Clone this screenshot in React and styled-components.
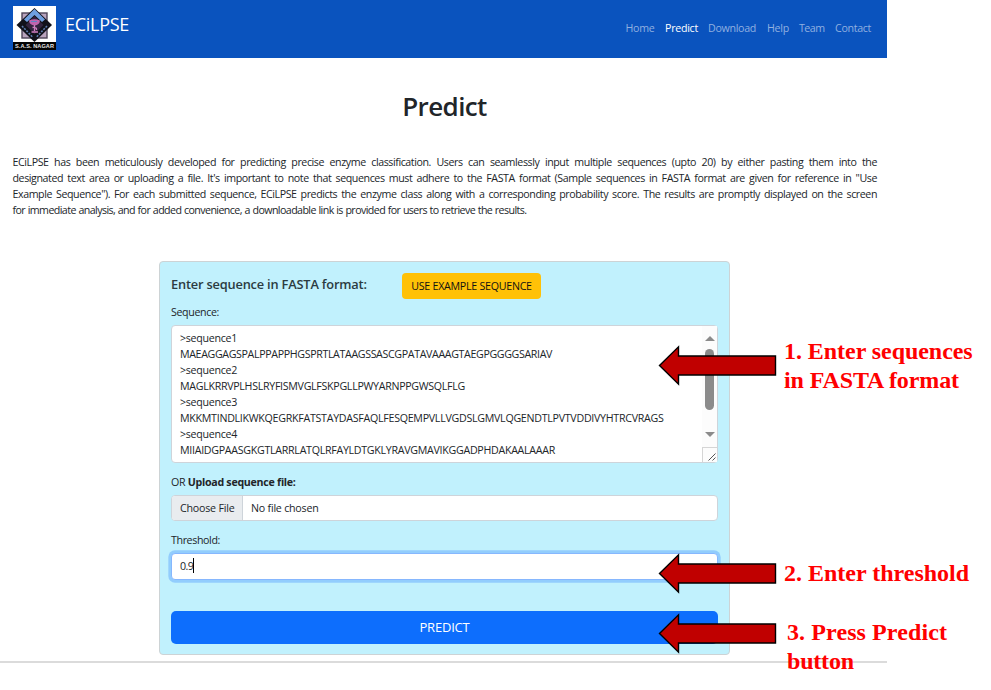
import React from 'react';
import styled, { createGlobalStyle } from 'styled-components';

const GlobalStyle = createGlobalStyle`
  *, *::before, *::after { box-sizing: border-box; }
  body {
    margin: 0;
    background: #fff;
    color: #212529;
    font: 400 10.67px/16px "Open Sans", "Noto Sans", sans-serif;
    overflow: hidden;
  }
`;

const Stage = styled.div`
  position: relative;
  width: 991px;
  height: 690px;
`;

const Page = styled.div`
  width: 887px;
  height: 663px;
  display: flex;
  flex-direction: column;
  border-bottom: 2px solid #dbdbdb;
`;

const Navbar = styled.header`
  height: 58px;
  flex: none;
  display: flex;
  align-items: flex-start;
  padding: 6px 16px 0 13px;
  background: #0a53be;
`;

const Brand = styled.a`
  margin: 5px 0 0 9px;
  color: #fff;
  font-size: 18px;
  line-height: 26px;
  letter-spacing: -0.28px;
`;

const Nav = styled.nav`
  display: flex;
  margin: 14px 0 0 auto;
`;

const NavLink = styled.a`
  width: ${(p) => p.$w}px;
  white-space: nowrap;
  color: ${(p) => (p.$active ? '#fff' : '#90b0e0')};
  letter-spacing: ${(p) => p.$ls}px;
`;

const Title = styled.h1`
  margin: 30px 0 0 2px;
  text-align: center;
  font-size: 26px;
  line-height: 36px;
  font-weight: 600;
  letter-spacing: -0.6px;
`;

const Intro = styled.p`
  width: 864.5px;
  margin: 30px 0 0 12.5px;
`;

const IntroLine = styled.span`
  display: block;
  white-space: nowrap;
  letter-spacing: ${(p) => (p.$last ? -0.58 : -0.42)}px;
  word-spacing: ${(p) => (p.$last ? 0.4 : 0)}px;
  text-align: justify;
  text-align-last: ${(p) => (p.$last ? 'left' : 'justify')};
`;

const Card = styled.form`
  width: 571px;
  height: 394px;
  flex: none;
  margin: 43px 0 0 159px;
  padding: 11px;
  display: flex;
  flex-direction: column;
  background: #c1f1fd;
  border: 1px solid #cdd3d5;
  border-radius: 4px;
`;

const CardHeader = styled.div`
  display: flex;
  gap: 35px;
  height: 26px;
`;

const CardTitle = styled.h2`
  width: 196px;
  margin: 1px 0 0;
  white-space: nowrap;
  font-size: 12.8px;
  line-height: 20px;
  font-weight: 600;
  color: #2b3b41;
  letter-spacing: -0.18px;
`;

const ExampleButton = styled.button`
  width: 139px;
  height: 26px;
  padding: 0;
  border: 0;
  border-radius: 4px;
  background: #ffc107;
  color: #111;
  font: inherit;
  letter-spacing: -0.26px;
`;

const Label = styled.label`
  height: 16px;
  margin-top: ${(p) => p.$top}px;
  margin-bottom: 5px;
  letter-spacing: ${(p) => p.$ls}px;
  white-space: pre;

  b { letter-spacing: -0.28px; }
`;

const SequenceBox = styled.div`
  display: flex;
  height: 138px;
  flex: none;
  background: #fff;
  border: 1px solid #ced4da;
  border-radius: 4px;
`;

const SequenceText = styled.div`
  flex: 1;
  padding: 4px 8px;
`;

const SequenceLine = styled.div`
  white-space: nowrap;
  letter-spacing: ${(p) => p.$ls}px;
`;

const Scrollbar = styled.div`
  width: 15px;
  display: flex;
  flex-direction: column;
  align-items: center;
  background: #fcfcfc;
`;

const ScrollArrow = styled.i`
  width: 0;
  height: 0;
  margin: ${(p) => (p.$down ? '22px 0 0' : '10px 0 0')};
  border: 5px solid transparent;
  border-width: ${(p) => (p.$down ? '5px 5px 0' : '0 5px 5px')};
  border-${(p) => (p.$down ? 'top' : 'bottom')}-color: #8b8b8b;
`;

const ScrollThumb = styled.div`
  width: 9px;
  height: 61px;
  margin-top: 8px;
  border-radius: 5px;
  background: #8b8b8b;
`;

const Resizer = styled.svg`
  width: 15px;
  height: 15px;
  margin-top: auto;
`;

const FileInput = styled.div`
  display: flex;
  height: 26px;
  flex: none;
  background: #fff;
  border: 1px solid #ced4da;
  border-radius: 4px;
  line-height: 25px;
  overflow: hidden;
`;

const FileButton = styled.span`
  width: 71px;
  padding-left: 8px;
  background: #e9ecef;
  border-right: 1px solid #ced4da;
  letter-spacing: -0.21px;
`;

const FileName = styled.span`
  padding-left: 8px;
  letter-spacing: -0.22px;
`;

const ThresholdInput = styled.div`
  display: flex;
  align-items: center;
  height: 27px;
  flex: none;
  padding: 0 8px 2px;
  background: #fff;
  border: 1px solid #86b7fe;
  border-radius: 4px;
  box-shadow: 0 0 0 2.67px #92cdfd;
  letter-spacing: -0.6px;
`;

const Caret = styled.span`
  width: 1px;
  height: 15px;
  background: #000;
`;

const PredictButton = styled.button`
  height: 33px;
  margin-top: 31px;
  padding: 0;
  border: 0;
  border-radius: 5px;
  background: #0d6efd;
  color: #fff;
  font: 400 13px/33px "Open Sans", sans-serif;
  letter-spacing: -0.2px;
`;

const Arrow = styled.svg`
  position: absolute;
  left: 658px;
  top: ${(p) => p.$top}px;
  width: 120px;
  height: 42px;
`;

const Note = styled.div`
  position: absolute;
  left: ${(p) => p.$left}px;
  top: ${(p) => p.$top}px;
  color: #f00;
  font: 700 24px/29px "Liberation Serif", serif;
  white-space: pre;
`;

const NoteLine = styled.div`
  letter-spacing: ${(p) => p.$ls || 0}px;
`;

function Logo() {
  return (
    <svg width="43" height="44" viewBox="0 0 43 44">
      <rect width="43" height="44" fill="#fff" />
      <rect x="9" y="7" width="25" height="25" fill="#b9a3bd" stroke="#4e4458" strokeWidth="1.400" />
      <path d="M21.500 2 39 19 21.500 36 3.500 19Z" fill="#11121a" />
      <path d="M21.500 3 32 13.500 29 16 21.500 9 14 16 11 13.500Z" fill="#6f9fe0" />
      <path d="M9 20 20 31.500M34 20 23 31.500" stroke="#5f7db0" strokeWidth="1.600" strokeDasharray="2 1.200" />
      <path d="M21.500 10 30.500 19 21.500 28 12.500 19Z" fill="#33243f" />
      <path d="M16 14.500q5.500-2.500 11 0-.5 4.500-5.500 5-5-.5-5.500-5Z" fill="#c264ae" />
      <path d="M21.500 19v6M18.500 26h6.500M19.500 21.500q4.500-.5 4 2.500" fill="none" stroke="#d07fc0" strokeWidth="1.300" />
      <path d="M18 15.500h6" stroke="#5e86c4" strokeWidth="1" />
      <rect y="36" width="43" height="8" fill="#050505" />
      <text x="21.5" y="42.300" textAnchor="middle" textLength="39" lengthAdjust="spacing" fill="#e4e4e4" fontFamily="Liberation Sans, sans-serif" fontWeight="700" fontSize="5.600">
        S.A.S. NAGAR
      </text>
    </svg>
  );
}

function PointerArrow({ top }) {
  return (
    <Arrow $top={top} viewBox="0 0 120 42">
      <path d="M1.500 20.500 20.500 1.800V11H117.500V30H20.500V39.200Z" fill="#c00000" stroke="#000" strokeWidth="1.400" />
    </Arrow>
  );
}

const LINKS = [
  ['Home', 39.5, -0.28],
  ['Predict', 43, -0.27],
  ['Download', 59, -0.31],
  ['Help', 32, -0.27],
  ['Team', 36, -0.5],
  ['Contact', 36, -0.32],
];

const INTRO = [
  'ECiLPSE has been meticulously developed for predicting precise enzyme classification. Users can seamlessly input multiple sequences (upto 20) by either pasting them into the',
  'designated text area or uploading a file. It\'s important to note that sequences must adhere to the FASTA format (Sample sequences in FASTA format are given for reference in "Use',
  'Example Sequence"). For each submitted sequence, ECiLPSE predicts the enzyme class along with a corresponding probability score. The results are promptly displayed on the screen',
  'for immediate analysis, and for added convenience, a downloadable link is provided for users to retrieve the results.',
];

const SEQUENCES = [
  ['>sequence1', -0.29],
  ['MAEAGGAGSPALPPAPPHGSPRTLATAAGSSASCGPATAVAAAGTAEGPGGGGSARIAV', -0.36],
  ['>sequence2', -0.29],
  ['MAGLKRRVPLHSLRYFISMVGLFSKPGLLPWYARNPPGWSQLFLG', -0.302],
  ['>sequence3', -0.29],
  ['MKKMTINDLIKWKQEGRKFATSTAYDASFAQLFESQEMPVLLVGDSLGMVLQGENDTLPVTVDDIVYHTRCVRAGS', -0.28],
  ['>sequence4', -0.29],
  ['MIIAIDGPAASGKGTLARRLATQLRFAYLDTGKLYRAVGMAVIKGGADPHDAKAALAAAR', -0.287],
];

export default function App() {
  return (
    <Stage>
      <GlobalStyle />
      <Page>
        <Navbar>
          <Logo />
          <Brand>ECiLPSE</Brand>
          <Nav>
            {LINKS.map(([text, w, ls]) => (
              <NavLink key={text} $w={w} $ls={ls} $active={text === 'Predict'}>{text}</NavLink>
            ))}
          </Nav>
        </Navbar>
        <Title>Predict</Title>
        <Intro>
          {INTRO.map((line, i) => (
            <IntroLine key={line} $last={i === INTRO.length - 1}>{line}</IntroLine>
          ))}
        </Intro>
        <Card>
          <CardHeader>
            <CardTitle>Enter sequence in FASTA format:</CardTitle>
            <ExampleButton type="button">USE EXAMPLE SEQUENCE</ExampleButton>
          </CardHeader>
          <Label $top={5} $ls={-0.36}>Sequence:</Label>
          <SequenceBox>
            <SequenceText>
              {SEQUENCES.map(([text, ls]) => (
                <SequenceLine key={text} $ls={ls}>{text}</SequenceLine>
              ))}
            </SequenceText>
            <Scrollbar>
              <ScrollArrow />
              <ScrollThumb />
              <ScrollArrow $down />
              <Resizer viewBox="0 0 15 15">
                <path d="M0 .5H15M.5 0V15" stroke="#d5d5d5" fill="none" />
                <path d="M6.500 13.500 13.500 6.500M10.500 13.500 13.500 10.500" stroke="#555" fill="none" />
              </Resizer>
            </Scrollbar>
          </SequenceBox>
          <Label $top={11} $ls={-0.3}>OR <b>Upload sequence file:</b></Label>
          <FileInput>
            <FileButton>Choose File</FileButton>
            <FileName>No file chosen</FileName>
          </FileInput>
          <Label $top={11} $ls={-0.38}>Threshold:</Label>
          <ThresholdInput>0.9<Caret /></ThresholdInput>
          <PredictButton type="button">PREDICT</PredictButton>
        </Card>
      </Page>
      <PointerArrow top={345} />
      <PointerArrow top={553} />
      <PointerArrow top={613} />
      <Note $left={784} $top={337}>
        <NoteLine $ls={-0.05}>1. Enter sequences</NoteLine>
        <NoteLine $ls={-0.1}>in FASTA format</NoteLine>
      </Note>
      <Note $left={784} $top={559}><NoteLine>2. Enter threshold</NoteLine></Note>
      <Note $left={787} $top={618}>
        <NoteLine $ls={0.1}>3. Press Predict</NoteLine>
        <NoteLine $ls={-0.2}>button</NoteLine>
      </Note>
    </Stage>
  );
}
